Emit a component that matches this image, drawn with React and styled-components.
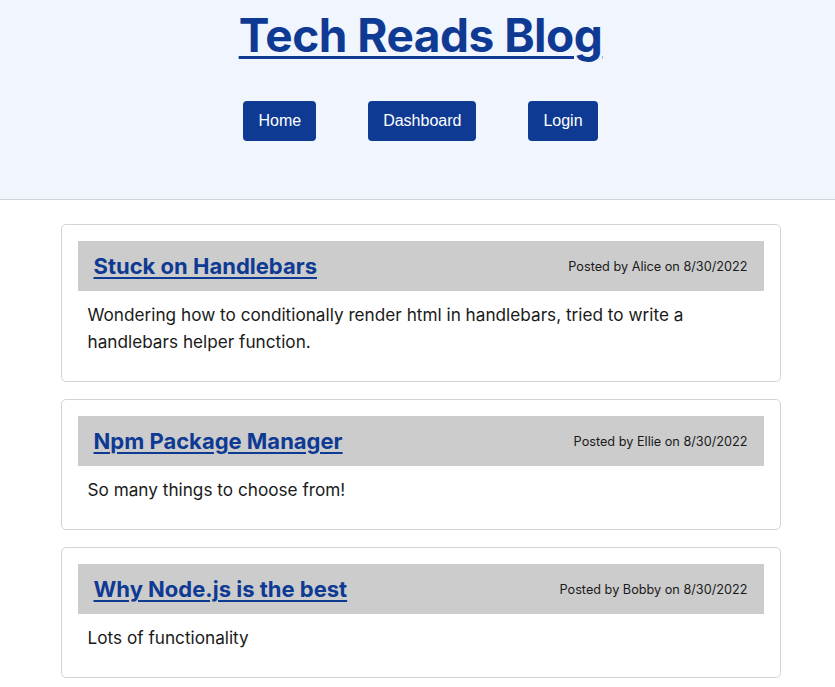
import React from "react";
import styled, { createGlobalStyle } from "styled-components";

const GlobalStyle = createGlobalStyle`
  html, body { margin: 0; padding: 0; background: #ffffff; }
  body { font-family: Inter, "Noto Sans", sans-serif; color: #1a1a1a; }
`;

const Header = styled.header`
  background: #f1f5fe;
  border-bottom: 1px solid #d4d4d8;
  padding: 6px 0 58px 6px;
  display: flex;
  flex-direction: column;
  align-items: center;
`;

const SiteTitle = styled.h1`
  margin: 0 0 37px;
  font-family: Inter, sans-serif;
  font-weight: 700;
  font-size: 46px;
  line-height: 58px;
  letter-spacing: -0.5px;
  a {
    color: #0e3a93;
    text-decoration: underline;
    text-decoration-thickness: 3px;
    text-underline-offset: 4px;
  }
`;

const Nav = styled.nav`
  display: flex;
  gap: 52px;
`;

const NavButton = styled.a`
  display: inline-block;
  background: #0e3a93;
  color: #ffffff;
  font-family: "Liberation Sans", Arial, sans-serif;
  font-size: 16px;
  line-height: 20px;
  padding: 10px 15px;
  border-radius: 4px;
  text-decoration: none;
`;

const Main = styled.main`
  display: flex;
  flex-direction: column;
  gap: 17px;
  width: 720px;
  margin: 24px auto 0;
  padding-left: 6px;
`;

const Card = styled.article`
  border: 1px solid #d4d4d8;
  border-radius: 5px;
  padding: 16px;
`;

const CardHeader = styled.div`
  background: #cccccc;
  height: 50px;
  padding: 0 16px;
  display: flex;
  align-items: center;
  justify-content: space-between;
`;

const PostTitle = styled.a`
  font-family: Inter, sans-serif;
  font-weight: 700;
  font-size: 22px;
  color: #0e3a93;
  text-decoration: underline;
  text-decoration-thickness: 2px;
  text-underline-offset: 3px;
`;

const Meta = styled.span`
  font-size: 12.7px;
  color: #1a1a1a;
`;

const Body = styled.p`
  margin: 0;
  padding: 10px;
  font-size: 17.2px;
  line-height: 27px;
`;

const posts = [
  {
    title: "Stuck on Handlebars",
    author: "Alice",
    date: "8/30/2022",
    body: "Wondering how to conditionally render html in handlebars, tried to write a handlebars helper function.",
  },
  { title: "Npm Package Manager", author: "Ellie", date: "8/30/2022", body: "So many things to choose from!" },
  { title: "Why Node.js is the best", author: "Bobby", date: "8/30/2022", body: "Lots of functionality" },
];

export default function App() {
  return (
    <>
      <GlobalStyle />
      <Header>
        <SiteTitle>
          <a href="#">Tech Reads Blog</a>
        </SiteTitle>
        <Nav>
          <NavButton href="#">Home</NavButton>
          <NavButton href="#">Dashboard</NavButton>
          <NavButton href="#">Login</NavButton>
        </Nav>
      </Header>
      <Main>
        {posts.map((p) => (
          <Card key={p.title}>
            <CardHeader>
              <PostTitle href="#">{p.title}</PostTitle>
              <Meta>
                Posted by {p.author} on {p.date}
              </Meta>
            </CardHeader>
            <Body>{p.body}</Body>
          </Card>
        ))}
      </Main>
    </>
  );
}
